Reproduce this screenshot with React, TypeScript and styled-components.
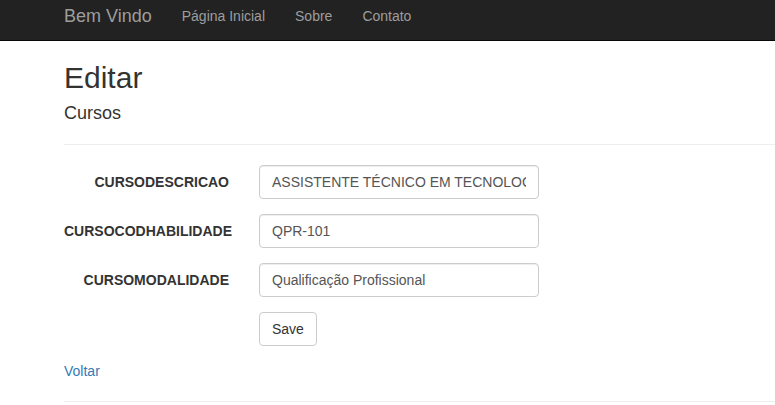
import React from "react";
import styled, { createGlobalStyle } from "styled-components";

const Global = createGlobalStyle`
  html, body { margin: 0; padding: 0; background: #fff; overflow: hidden; }
  body {
    font-family: "Liberation Sans", Arial, Helvetica, sans-serif;
    font-size: 14px;
    line-height: 1.42857143;
    color: #333;
  }
  * { box-sizing: border-box; }
`;

const Navbar = styled.nav`
  background: #222;
  border-bottom: 1px solid #080808;
  height: 41px;
`;

const Container = styled.div`
  margin-left: 49px;
  padding: 0 0 0 15px;
  display: flex;
  align-items: flex-start;
`;

const Brand = styled.a`
  margin-left: -15px;
  padding: 6px 15px 14px;
  font-size: 18px;
  line-height: 20px;
  color: #9d9d9d;
  text-decoration: none;
`;

const NavList = styled.ul`
  list-style: none;
  margin: 0;
  padding: 0;
  display: flex;
`;

const NavLink = styled.a`
  display: block;
  padding: 6px 15px 14px;
  line-height: 20px;
  font-size: 14px;
  color: #9d9d9d;
  text-decoration: none;
`;

const Body = styled.main`
  margin-left: 49px;
  padding: 0 0 0 15px;
`;

const Title = styled.h2`
  font-size: 30px;
  font-weight: 500;
  line-height: 1.1;
  margin: 20px 0 10px;
`;

const Subtitle = styled.h4`
  font-size: 18px;
  font-weight: 500;
  line-height: 1.1;
  margin: 10px 0 10px;
`;

const Rule = styled.hr`
  margin: 20px 0;
  border: 0;
  border-top: 1px solid #eee;
  height: 0;
`;

const FormGroup = styled.div`
  display: flex;
  margin: 0 0 15px -15px;
`;

const LabelCol = styled.label`
  width: 195px;
  flex: none;
  padding: 7px 15px 0;
  font-weight: 700;
  white-space: nowrap;
  display: block;
`;

const LabelText = styled.span<{ $overflow?: boolean }>`
  display: block;
  text-align: ${(p) => (p.$overflow ? "left" : "right")};
`;

const FieldCol = styled.div<{ $offset?: boolean }>`
  flex: 1;
  padding: 0 15px;
  margin-left: ${(p) => (p.$offset ? "195px" : "0")};
`;

const Input = styled.input`
  display: block;
  width: 100%;
  max-width: 280px;
  height: 34px;
  padding: 6px 12px;
  font-family: inherit;
  font-size: 14px;
  line-height: 1.42857143;
  color: #555;
  background: #fff;
  border: 1px solid #ccc;
  border-radius: 4px;
  box-shadow: inset 0 1px 1px rgba(0, 0, 0, 0.075);
  outline: none;
`;

const Button = styled.button`
  display: inline-block;
  height: 34px;
  padding: 6px 12px;
  font-family: inherit;
  font-size: 14px;
  line-height: 1.42857143;
  color: #333;
  background: #fff;
  border: 1px solid #ccc;
  border-radius: 4px;
  cursor: pointer;
`;

const BackLink = styled.a`
  display: inline-block;
  color: #337ab7;
  text-decoration: none;
`;

const fields = [
  { label: "CURSODESCRICAO", value: "ASSISTENTE TÉCNICO EM TECNOLOGIA DA INFORMAÇÃO", overflow: false },
  { label: "CURSOCODHABILIDADE", value: "QPR-101", overflow: true },
  { label: "CURSOMODALIDADE", value: "Qualificação Profissional", overflow: false },
];

export default function App() {
  return (
    <>
      <Global />
      <Navbar>
        <Container>
          <Brand href="#">Bem Vindo</Brand>
          <NavList>
            <li><NavLink href="#">Página Inicial</NavLink></li>
            <li><NavLink href="#">Sobre</NavLink></li>
            <li><NavLink href="#">Contato</NavLink></li>
          </NavList>
        </Container>
      </Navbar>
      <Body>
        <Title>Editar</Title>
        <Subtitle>Cursos</Subtitle>
        <Rule />
        {fields.map((f) => (
          <FormGroup key={f.label}>
            <LabelCol>
              <LabelText $overflow={f.overflow}>{f.label}</LabelText>
            </LabelCol>
            <FieldCol>
              <Input defaultValue={f.value} readOnly />
            </FieldCol>
          </FormGroup>
        ))}
        <FormGroup>
          <FieldCol $offset>
            <Button>Save</Button>
          </FieldCol>
        </FormGroup>
        <div>
          <BackLink href="#">Voltar</BackLink>
        </div>
        <Rule />
      </Body>
    </>
  );
}
